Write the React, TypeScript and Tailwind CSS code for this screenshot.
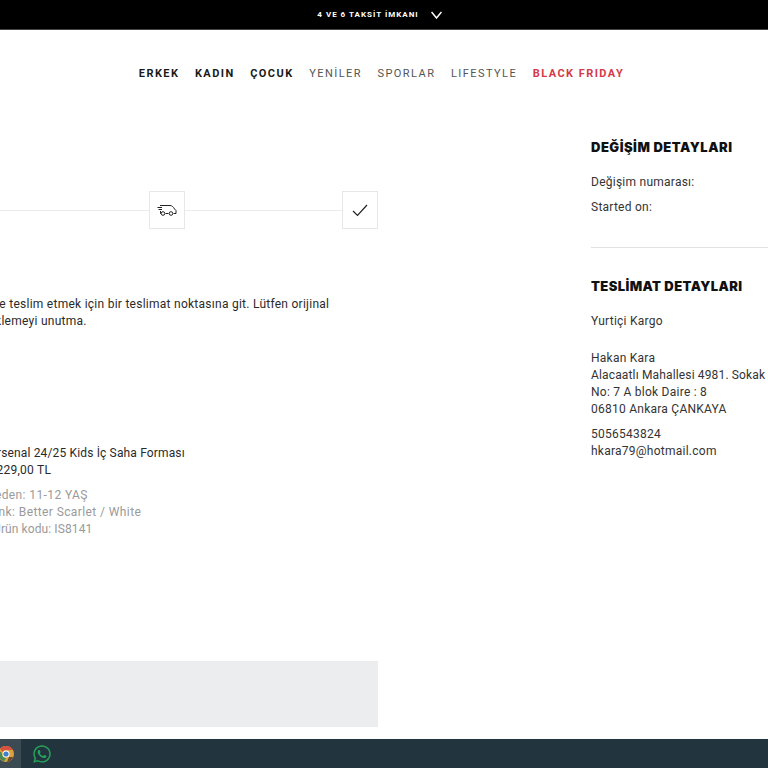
import React from 'react';
import { FaWhatsapp } from 'react-icons/fa';

const bodyFont = "font-['Roboto','Liberation_Sans',sans-serif]";

const NavLink: React.FC<{ label: string; className: string }> = ({ label, className }) => (
  <a className={`text-[11px] leading-[14px] tracking-[1.45px] ${className}`}>{label}</a>
);

const StepBox: React.FC<{ children: React.ReactNode }> = ({ children }) => (
  <div className="flex h-[38px] w-[36px] shrink-0 items-center justify-center border border-[#e6e7e8] bg-white">
    {children}
  </div>
);

const TruckIcon = () => (
  <svg width="20" height="12" viewBox="0 0 20 12" fill="none" stroke="#222" strokeWidth="1">
    <path d="M3 1.5H13C15 1.5 16.5 3 17.5 5L19 6.5V9.5H16.5M11.5 9.5H8.5M4 9.5H3.5V7" />
    <circle cx="6" cy="9.5" r="1.8" />
    <circle cx="14" cy="9.5" r="1.8" />
    <path d="M0.5 3.5H5M1.5 5.5H5" />
  </svg>
);

const CheckIcon = () => (
  <svg width="16" height="13" viewBox="0 0 16 13" fill="none" stroke="#222" strokeWidth="1.2">
    <path d="M1 7L5.5 11.5L15 1" />
  </svg>
);

const ChromeIcon = () => (
  <svg width="16" height="16" viewBox="0 0 16 16">
    <circle cx="8" cy="8" r="8" fill="#d9a23c" />
    <path d="M8 0A8 8 0 0 1 15 4H8A4 4 0 0 0 4.500 6L2 2.500A8 8 0 0 1 8 0Z" fill="#d8503f" />
    <path d="M0.500 5A8 8 0 0 0 6 15.500L8 12A4 4 0 0 1 4.200 7Z" fill="#4a8a55" />
    <path d="M15 11A8 8 0 0 1 9 16L11 11Z" fill="#6b4a35" />
    <circle cx="8" cy="8" r="3.500" fill="#fff" />
    <circle cx="8" cy="8" r="2.600" fill="#3f7fd0" />
  </svg>
);

export default function App() {
  return (
    <div className={`flex h-[768px] w-[768px] flex-col overflow-hidden bg-white ${bodyFont}`}>
      {/* promo strip */}
      <div className="flex h-[30px] shrink-0 items-center justify-center gap-[12px] border-b border-[#444] bg-black pr-[9px]">
        <span className="text-[8px] font-bold tracking-[1px] text-white">4 VE 6 TAKSİT İMKANI</span>
        <svg width="11" height="8" viewBox="0 0 11 8" fill="none" stroke="#fff" strokeWidth="1.500">
          <path d="M0.500 1L5.500 7L10.500 1" />
        </svg>
      </div>

      {/* nav */}
      <nav className="flex h-[62px] shrink-0 items-start justify-center gap-[15.500px] pt-[37px] pr-[5px]">
        <NavLink label="ERKEK" className="font-bold text-[#1a1a1a]" />
        <NavLink label="KADIN" className="font-bold text-[#1a1a1a]" />
        <NavLink label="ÇOCUK" className="font-bold text-[#1a1a1a]" />
        <NavLink label="YENİLER" className="text-[#555]" />
        <NavLink label="SPORLAR" className="text-[#555]" />
        <NavLink label="LIFESTYLE" className="text-[#555]" />
        <NavLink label="BLACK FRIDAY" className="font-bold text-[#d43a4a]" />
      </nav>

      <main className="flex min-h-0 flex-1">
        {/* left column */}
        <section className="flex w-[378px] shrink-0 flex-col pt-[99px] pb-[12px] text-[12px] text-[#2a2a2a]">
          <div className="flex items-center">
            <div className="h-px flex-1 bg-[#ececec]" />
            <StepBox>
              <TruckIcon />
            </StepBox>
            <div className="h-px w-[157px] bg-[#ececec]" />
            <StepBox>
              <CheckIcon />
            </StepBox>
          </div>

          <div className="mt-[67px] text-[12px] leading-[17px] tracking-[0.26px]">
            <p className="-ml-[18px] whitespace-nowrap">İade teslim etmek için bir teslimat noktasına git. Lütfen orijinal</p>
            <p className="-ml-[57px] whitespace-nowrap">faturayı eklemeyi unutma.</p>
          </div>

          <div className="mt-[115px] leading-[17px] tracking-[0.15px]">
            <p className="-ml-[11px] whitespace-nowrap">Arsenal 24/25 Kids İç Saha Forması</p>
            <p className="-ml-[14px] tracking-[0.25px] whitespace-nowrap">1.229,00 TL</p>
          </div>

          <div className="mt-[8px] leading-[17px] tracking-[0.4px] text-[#9a9a9a]">
            <p className="-ml-[13px] whitespace-nowrap">Beden: 11-12 YAŞ</p>
            <p className="-ml-[16px] whitespace-nowrap">Renk: Better Scarlet / White</p>
            <p className="-ml-[7px] tracking-[0.1px] whitespace-nowrap">Ürün kodu: IS8141</p>
          </div>

          <div className="mt-auto h-[66px] bg-[#ebedef]" />
        </section>

        {/* right column */}
        <aside className="ml-[213px] w-[240px] shrink-0 pt-[46px] text-[12px] leading-[17px] tracking-[0.25px] text-[#333]">
          <h2 className="font-['Inter',sans-serif] text-[13px] leading-[18px] font-black tracking-[0.5px] text-[#111]">
            DEĞİŞİM DETAYLARI
          </h2>
          <p className="mt-[18px]">Değişim numarası:</p>
          <p className="mt-[8px]">Started on:</p>
          <div className="mt-[31px] border-t border-[#e2e2e2]" />

          <h2 className="mt-[29px] font-['Inter',sans-serif] text-[13px] leading-[18px] font-black tracking-[0.4px] text-[#111]">
            TESLİMAT DETAYLARI
          </h2>
          <p className="mt-[18px]">Yurtiçi Kargo</p>
          <div className="mt-[20px]">
            <p>Hakan Kara</p>
            <p className="tracking-[0.15px]">Alacaatlı Mahallesi 4981. Sokak</p>
            <p>No: 7 A blok Daire : 8</p>
            <p>06810 Ankara ÇANKAYA</p>
          </div>
          <div className="mt-[8px]">
            <p>5056543824</p>
            <p>hkara79@hotmail.com</p>
          </div>
        </aside>
      </main>

      {/* taskbar */}
      <footer className="flex h-[29px] shrink-0 items-center bg-[#22343e] pt-[1px]">
        <div className="-mt-[1px] flex h-[29px] w-[21px] items-center justify-end overflow-hidden bg-[#3b4a53] pr-[7px]">
          <div className="shrink-0">
            <ChromeIcon />
          </div>
        </div>
        <div className="ml-[11px]">
          <FaWhatsapp className="h-[20px] w-[20px] text-[#25a35a]" />
        </div>
      </footer>
    </div>
  );
}
